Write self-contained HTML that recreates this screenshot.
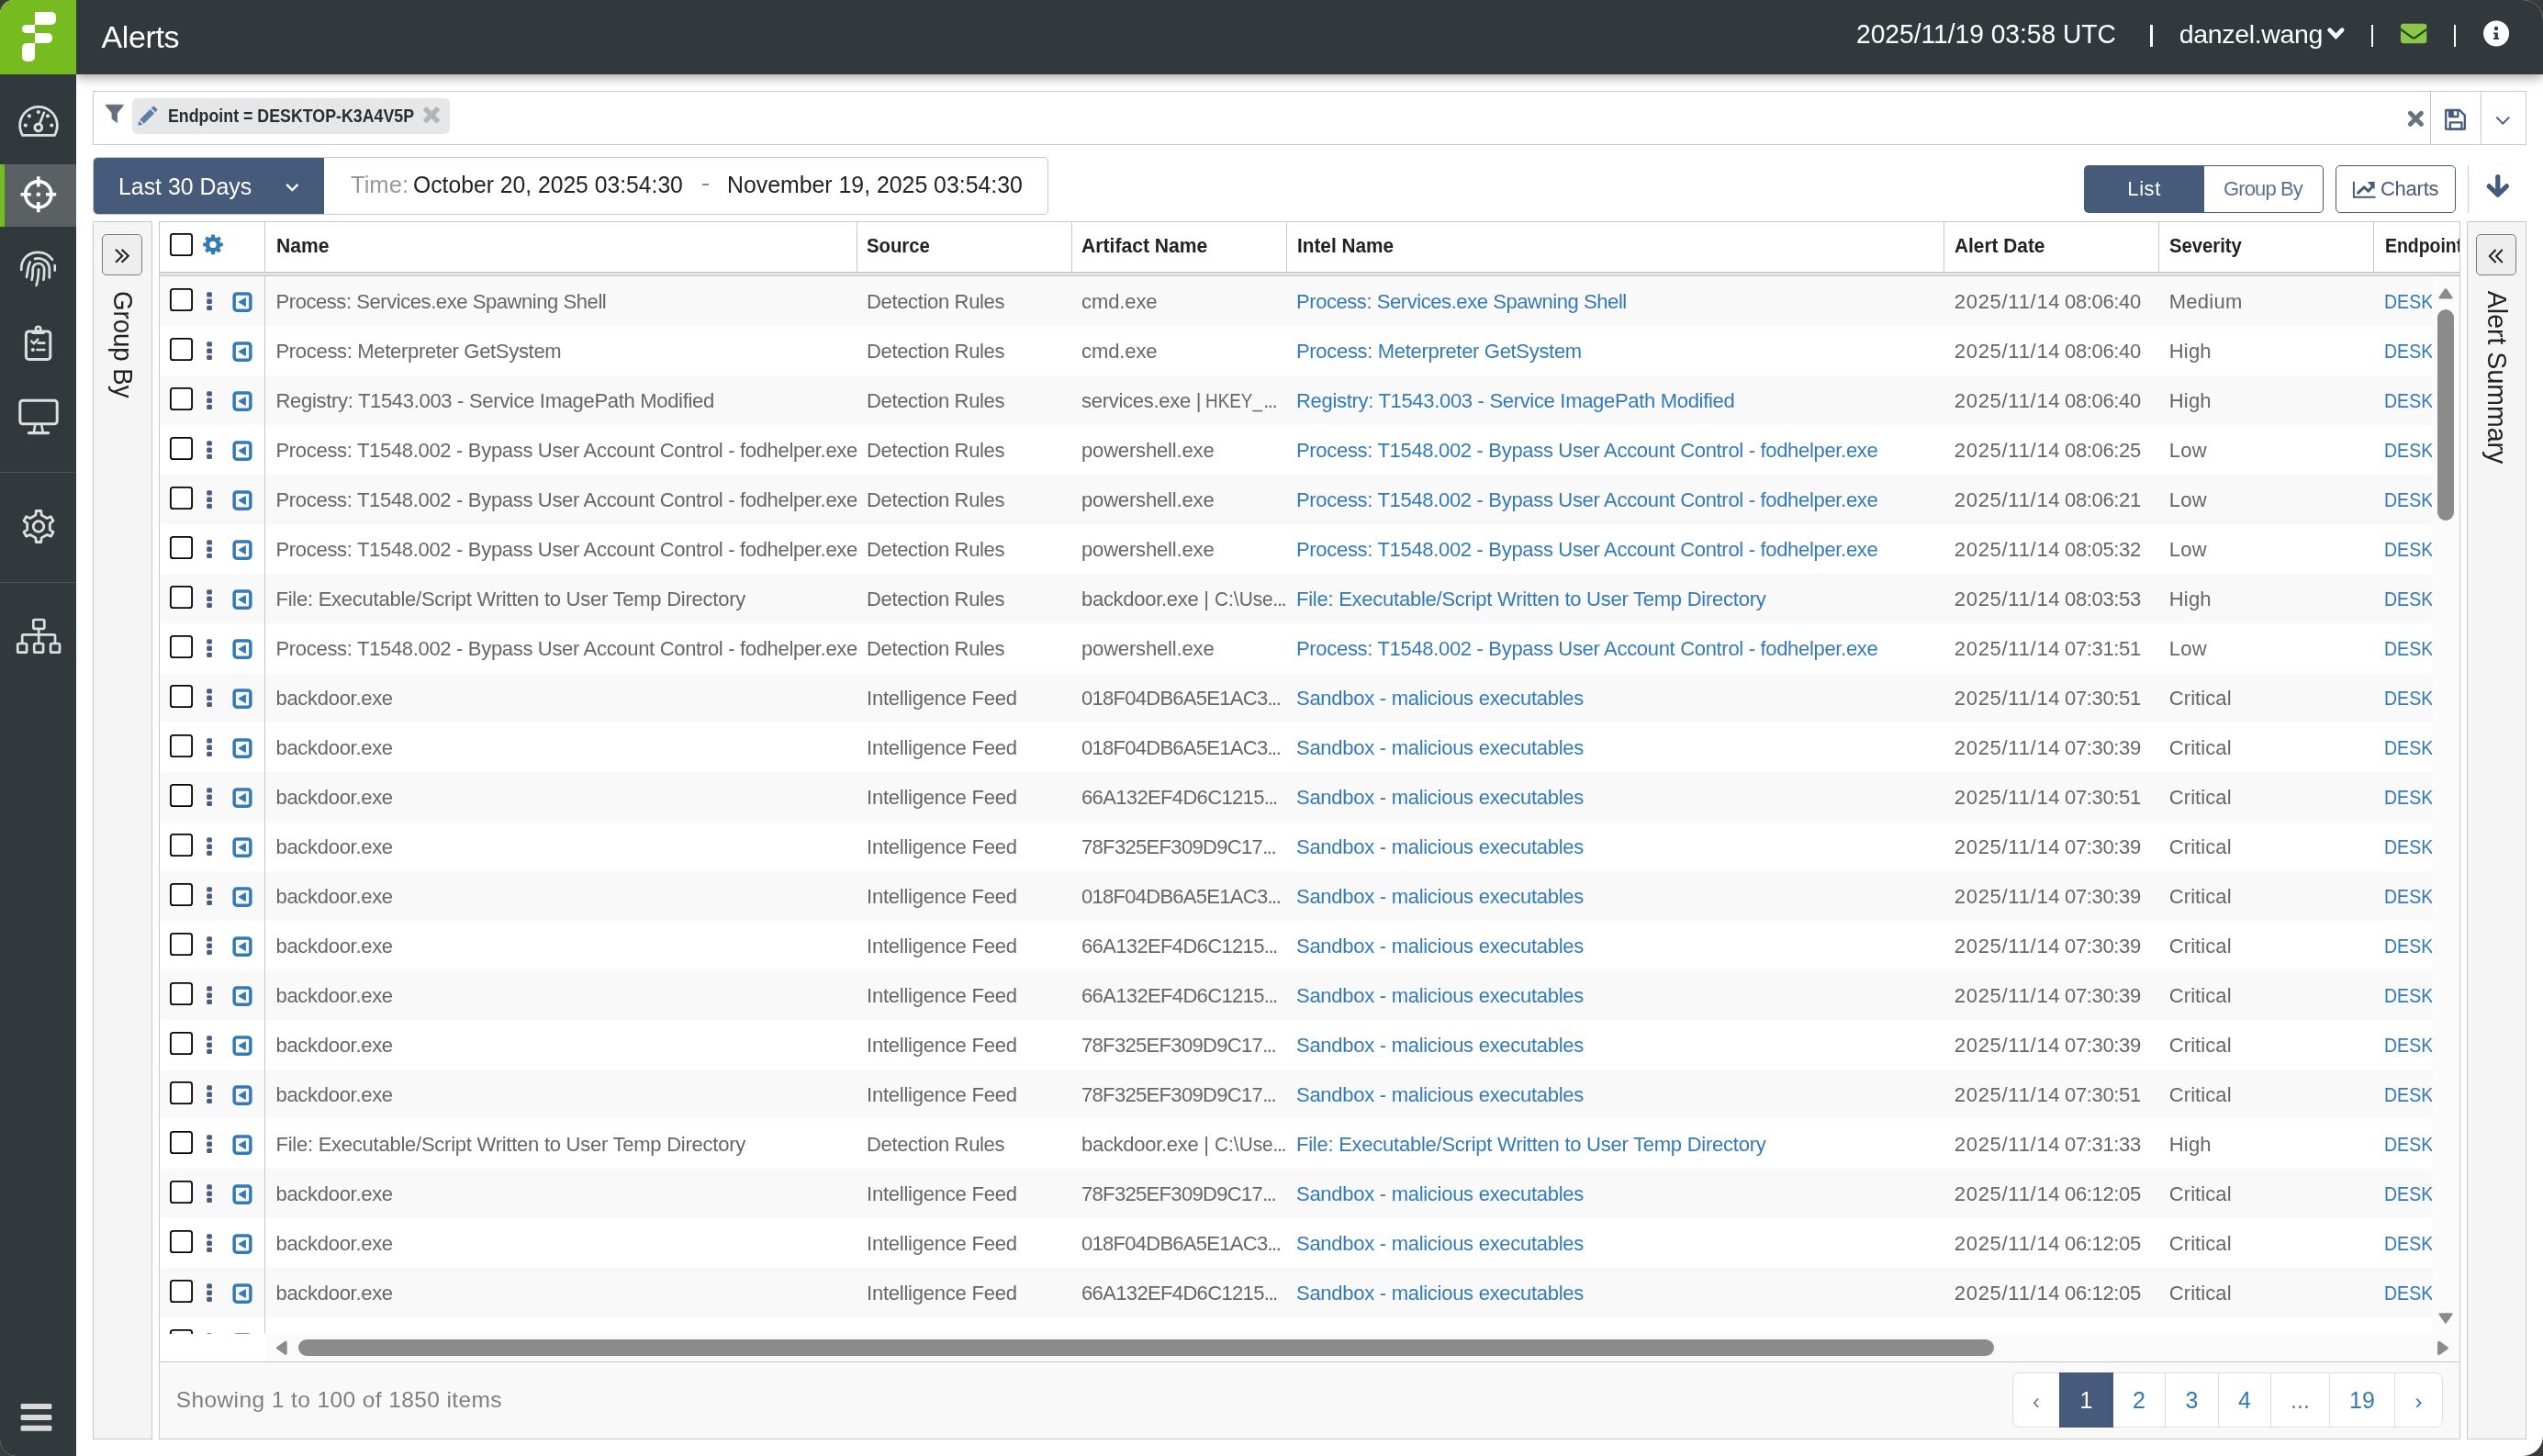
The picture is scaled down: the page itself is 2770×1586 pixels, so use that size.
<!DOCTYPE html>
<html><head><meta charset="utf-8"><title>Alerts</title>
<style>
*{box-sizing:border-box;margin:0;padding:0}
html,body{width:2770px;height:1586px;overflow:hidden;background:#3b3b3b}
body{font-family:"Liberation Sans",sans-serif;color:#666}
#app{position:absolute;left:0;top:0;width:2770px;height:1586px;background:#fff;overflow:hidden;border-radius:15px 22px 22px 18px;will-change:transform}
.abs{position:absolute}
svg{position:absolute;overflow:visible}
#side{position:absolute;left:0;top:0;width:83px;height:1586px;background:#32393c;z-index:5}
#logo{position:absolute;left:0;top:0;width:83px;height:81px;background:#76bb1f}
#logo i{position:absolute;background:#fff}
#hdr{position:absolute;left:83px;top:0;width:2687px;height:81px;background:#32393c;box-shadow:0 4px 11px rgba(0,0,0,.34);z-index:4;color:#fff}
#hdr .t{position:absolute;white-space:nowrap;color:#fff}
.act{position:absolute;left:0;top:179px;width:83px;height:68px;background:#5b6062;border-left:5px solid #76bb1f}
.sdiv{position:absolute;left:0;width:83px;height:1px;background:#4a5154}
.box{position:absolute;border:1px solid #c9c9c9;background:#fff}
.t{position:absolute;white-space:nowrap}
#rows{position:absolute;left:174px;top:301px;width:2475px;height:1152px;overflow:hidden}
.row{position:absolute;left:0;width:2475px;height:54px;background:#fff;font-size:22px;line-height:54px}
.row.odd{background:#f9f9f9}
.c{position:absolute;top:1px;white-space:nowrap;color:#666}
.dt{font-style:normal;letter-spacing:-1.5px}
.c4,.c7{color:#337ab7}
.cb{position:absolute;left:11px;top:13px;width:25px;height:25px;border:2px solid #0a0a0a;border-radius:3.5px;background:#fff}
.vsep{position:absolute;width:1px;background:#c9c9c9}
.th{position:absolute;top:240px;font-size:22px;line-height:54px;font-weight:bold;color:#222;white-space:nowrap;transform-origin:0 50%}
.pg{position:absolute;top:0;height:58px;line-height:58px;text-align:center;font-size:25px;color:#337ab7;border-left:1px solid #ddd}

.ri{position:absolute;left:10px;top:12px;width:94px;height:30px}

</style></head>
<body>
<div id="app">
<svg width="0" height="0" style="position:absolute"><defs><g id="cbx"><rect x="1.9" y="1.9" width="23.2" height="23.2" rx="2.7" fill="#fff" stroke="#050505" stroke-width="1.85"/></g><g id="rowic"><use href="#cbx"/><rect x="41.2" y="5.2" width="5.75" height="5.4" rx="1.5" fill="#485d80"/><rect x="41.2" y="12.5" width="5.75" height="5.4" rx="1.5" fill="#485d80"/><rect x="41.2" y="19.8" width="5.75" height="5.3" rx="1.5" fill="#485d80"/><rect x="71.15" y="6.95" width="17.7" height="18.2" rx="2.8" fill="none" stroke="#337ab7" stroke-width="3.5"/><path d="M83.3 11.9L76.3 16.1L83.3 20.3Z" fill="#337ab7" stroke="#337ab7" stroke-width="1.2" stroke-linejoin="round"/></g></defs></svg>

<!-- ===== sidebar ===== -->
<div id="side">
 <div id="logo">
  <i style="left:38px;top:13px;width:23.3px;height:14px;border-radius:0 5px 5px 0"></i>
  <i style="left:24px;top:26.5px;width:14px;height:9.5px;border-radius:5px 0 0 5px"></i>
  <i style="left:38px;top:36px;width:19.3px;height:11px;border-radius:0 5px 5px 0"></i>
  <i style="left:24px;top:47px;width:14px;height:19.5px;border-radius:5px 0 5px 5px"></i>
 </div>
 <div class="act"></div>
 <div class="sdiv" style="top:514px"></div>
 <div class="sdiv" style="top:634px"></div>
 <svg width="83" height="1586" style="left:0;top:0" fill="none" stroke="#dedede" stroke-width="3" stroke-linecap="round" stroke-linejoin="round">
  <!-- gauge -->
  <path d="M24.7 147.4 A20.35 20.35 0 1 1 59.3 147.4 Z" stroke-width="2.8"/>
  <g fill="#dedede" stroke="none"><circle cx="27.8" cy="136.5" r="2.1"/><circle cx="31.9" cy="126.3" r="2.1"/><circle cx="41.8" cy="122.1" r="2.1"/><circle cx="52" cy="126.3" r="2.1"/><circle cx="56.3" cy="136.5" r="2.1"/></g>
  <path d="M43.2 134.8 L48 122.6" stroke-width="2.6"/>
  <circle cx="41.8" cy="138.9" r="3.9"/>
  <!-- crosshair -->
  <g stroke="#fff" stroke-width="3.6" stroke-linecap="butt">
   <circle cx="41.8" cy="211.7" r="14.1"/>
   <path d="M22.5 211.7H33.8 M50 211.7H61.2 M41.8 192.2V203.6 M41.8 220V231.2"/>
  </g>
  <circle cx="41.8" cy="211.7" r="2.3" fill="#fff" stroke="none"/>
  <!-- fingerprint -->
  <g stroke-width="2.7">
   <path d="M23.3 293.8 C22.6 282 31 274.8 41.5 274.8 C48 274.8 53.6 277.8 57 282.8"/>
   <path d="M59.7 289 V294.6"/>
   <path d="M32.8 285.4 C30.2 290 30.3 296 28.9 302"/>
   <path d="M38 281.9 C46 279.6 53.8 285 53.8 293 V302.5"/>
   <path d="M34.6 304.8 C36.2 299.6 35.4 296 35.7 293 C36.2 289 38.6 287 41.8 287 C45.5 287 48.2 289.8 48.2 294 C48.2 298 48 301.5 47.4 304.8"/>
   <path d="M42 293.6 C42 300 41.2 306 39.6 310.8"/>
  </g>
  <!-- clipboard -->
  <rect x="28.4" y="361" width="26.4" height="30.4" rx="3"/>
  <circle cx="41.6" cy="358.4" r="2.7" stroke-width="2.6"/>
  <path d="M36 362.3H47.2" stroke-width="3.4"/>
  <path d="M34.2 371.6L37 374.3L41.2 369.6" stroke-width="2.4"/>
  <path d="M41.5 373.6H48.4 M40.4 381H48.4" stroke-width="2.6"/>
  <circle cx="35.8" cy="381" r="2" fill="#dedede" stroke="none"/>
  <!-- monitor -->
  <rect x="21.8" y="436.2" width="40.4" height="25.6" rx="3"/>
  <path d="M38.2 463.5L37 470 M45.4 463.5L46.6 470" stroke-width="2.6"/>
  <path d="M31.4 471.6H52.6" stroke-width="3.2"/>
  <!-- gear -->
  <path d="M38.82 561.10 L39.31 556.51 L44.69 556.51 L45.18 561.10 L51.15 564.54 L55.37 562.68 L58.06 567.34 L54.33 570.06 L54.33 576.94 L58.06 579.66 L55.37 584.32 L51.15 582.46 L45.18 585.90 L44.69 590.49 L39.31 590.49 L38.82 585.90 L32.85 582.46 L28.63 584.32 L25.94 579.66 L29.67 576.94 L29.67 570.06 L25.94 567.34 L28.63 562.68 L32.85 564.54Z" stroke-width="2.8"/>
  <circle cx="42" cy="573.5" r="5.8" stroke-width="2.8"/>
  <!-- sitemap -->
  <g stroke-width="2.7">
  <rect x="36.3" y="675" width="12" height="9.8" rx="1.5"/>
  <rect x="19.2" y="701" width="9.9" height="9.7" rx="1.5"/>
  <rect x="37.2" y="701" width="9.9" height="9.7" rx="1.5"/>
  <rect x="55.1" y="701" width="9.9" height="9.7" rx="1.5"/>
  <path d="M42.2 685V700 M24.2 700V692.8Q24.2 691.4 25.6 691.4H58.6Q60 691.4 60 692.8V700"/>
  </g>
  <!-- hamburger -->
  <g fill="#d9d9d9" stroke="none"><rect x="22.6" y="1529" width="33.8" height="6" rx="1.5"/><rect x="22.6" y="1541" width="33.8" height="6" rx="1.5"/><rect x="22.6" y="1552.8" width="33.8" height="6" rx="1.5"/></g>
 </svg>
</div>
<!-- ===== header ===== -->
<div id="hdr">
 <div class="t" id="h_title" style="left:27.60px;top:16.00px;font-size:34px;line-height:48px;color:#fff;letter-spacing:-0.4px;">Alerts</div>
 <div class="t" id="h_time" style="left:1939.05px;top:16.40px;font-size:29.5px;line-height:41px;color:#fff;transform-origin:0 50%;transform:scaleX(0.9548);">2025/11/19 03:58 UTC</div>
 <div class="t" id="h_user" style="left:2290.80px;top:17.30px;font-size:28.5px;line-height:40px;color:#fff;letter-spacing:-0.35px;">danzel.wang</div>
 <div class="abs" style="left:2259px;top:27px;width:2.6px;height:24px;background:#fff"></div>
 <div class="abs" style="left:2499.5px;top:27px;width:2.6px;height:24px;background:#fff"></div>
 <div class="abs" style="left:2589.5px;top:27px;width:2.6px;height:24px;background:#fff"></div>
 <svg width="2687" height="81" style="left:0;top:0">
  <path d="M2454.6 32.6L2461.4 39.6L2468.2 32.6" fill="none" stroke="#fff" stroke-width="4.6" stroke-linecap="round" stroke-linejoin="miter"/>
  <rect x="2532" y="25.8" width="28.3" height="21.4" rx="3.2" fill="#8cc74c"/>
  <path d="M2531.5 31.6L2544.6 41Q2546.1 42 2547.7 41L2560.8 31.6" fill="none" stroke="#234d10" stroke-width="2.2"/>
  <circle cx="2636.1" cy="36.5" r="14" fill="#fff"/>
  <circle cx="2636" cy="31" r="2.2" fill="#32393c"/>
  <path d="M2633 35.4H2637.8V41.2H2639.2V43H2633V41.2H2634.5V37.1H2633Z" fill="#32393c"/>
 </svg>
</div>
<!-- ===== filter bar ===== -->
<div class="box" style="left:101px;top:99px;width:2651px;height:59px"></div>
<div class="vsep" style="left:2647px;top:100px;height:57px"></div>
<div class="vsep" style="left:2702px;top:100px;height:57px"></div>
<div class="abs" style="left:144px;top:107px;width:346px;height:38.7px;background:#e6e7e9;border-radius:6px"></div>
<div class="t" id="chip" style="left:182.79px;top:113.40px;font-size:19.5px;line-height:27px;color:#2b2b33;font-weight:bold;transform-origin:0 50%;transform:scaleX(0.9123);">Endpoint = DESKTOP-K3A4V5P</div>
<svg width="2770" height="70" style="left:0;top:95px">
 <!-- funnel -->
 <path d="M116 19.2H133.6Q135 19.2 134 20.4L127.6 28V38.6L122 34.4V28L115.6 20.4Q114.6 19.2 116 19.2Z" fill="#676e7b" stroke="#676e7b" stroke-width="0.8" stroke-linejoin="round"/>
 <!-- pencil -->
 <g fill="#5b7fa8">
  <path d="M150.2 41.8L151.3 36.4L155.6 40.7Z"/>
  <path d="M152.3 35.2L163.6 23.9L168.1 28.4L156.8 39.7Z"/>
  <path d="M164.7 22.8L166.3 21.2Q167.4 20.1 168.5 21.2L170.8 23.5Q171.9 24.6 170.8 25.7L169.2 27.3Z"/>
 </g>
 <!-- chip x -->
 <path d="M462.6 22.9L477.4 37.7 M477.4 22.9L462.6 37.7" stroke="#b4b4b4" stroke-width="5.4" fill="none"/>
 <!-- clear x -->
 <path d="M2625.4 28.3L2637.4 40.3 M2637.4 28.3L2625.4 40.3" stroke="#6b7380" stroke-width="5" stroke-linecap="round" fill="none"/>
 <!-- save -->
 <g fill="none" stroke="#44597c" stroke-width="2.3" stroke-linejoin="round">
  <path d="M2664.2 25H2679.2L2684.8 30.6V45.7H2664.2Z"/>
  <rect x="2668.8" y="38.4" width="12.6" height="7.3"/>
  <path d="M2668 25.5V32H2677.4V25.5"/>
  <rect x="2668" y="25.4" width="4.8" height="6.6" fill="#44597c" stroke="none"/>
 </g>
 <!-- chevron -->
 <path d="M2719.4 32.6L2726.3 39.6L2733.2 32.6" fill="none" stroke="#44597c" stroke-width="2"/>
</svg>
<!-- ===== time row ===== -->
<div class="box" style="left:101px;top:171px;width:1041px;height:63px;border-radius:5px"></div>
<div class="abs" style="left:102px;top:172px;width:251px;height:61px;background:#465a7a;border-radius:4.5px 0 0 4.5px"></div>
<div class="t" id="t_last" style="left:128.97px;top:185.10px;font-size:25.8px;line-height:36px;color:#fff;transform-origin:0 50%;transform:scaleX(0.9635);">Last 30 Days</div>
<div class="t" id="t_time" style="left:382.40px;top:183.10px;font-size:25.8px;line-height:36px;color:#999;transform-origin:0 50%;transform:scaleX(0.9918);">Time:</div>
<div class="t" id="t_d1" style="left:450.14px;top:183.10px;font-size:25.8px;line-height:36px;color:#222;transform-origin:0 50%;transform:scaleX(0.9574);">October 20, 2025 03:54:30</div>
<div class="abs" style="left:765.2px;top:200.3px;width:6.9px;height:2.2px;background:#888"></div>
<div class="t" id="t_d2" style="left:792.37px;top:183.10px;font-size:25.8px;line-height:36px;color:#222;transform-origin:0 50%;transform:scaleX(0.9631);">November 19, 2025 03:54:30</div>
<div class="abs" style="left:2270px;top:180px;width:131px;height:51.6px;background:#465a7a;border-radius:5px 0 0 5px"></div>
<div class="abs" style="left:2400.8px;top:180px;width:129.9px;height:51.6px;border:1px solid #465a7a;border-left:none;border-radius:0 5px 5px 0;background:#fff"></div>
<div class="abs" style="left:2544px;top:180px;width:131px;height:51.6px;border:1px solid #465a7a;border-radius:5px;background:#fff"></div>
<div class="t" id="b_list" style="left:2317.30px;top:190.20px;font-size:22px;line-height:31px;color:#fff;letter-spacing:0.6px;">List</div>
<div class="t" id="b_grp" style="left:2422.10px;top:190.20px;font-size:22px;line-height:31px;color:#5b7296;letter-spacing:-0.9px;">Group By</div>
<div class="t" id="b_chr" style="left:2592.90px;top:190.20px;font-size:22px;line-height:31px;color:#465a7a;letter-spacing:-0.22px;">Charts</div>
<div class="vsep" style="left:2688px;top:180px;height:52px"></div>
<svg width="2770" height="70" style="left:0;top:170px">
 <path d="M312.2 30.8L318.3 37L324.4 30.8" fill="none" stroke="#fff" stroke-width="2.4"/>
 <!-- chart icon -->
 <path d="M2563.9 27.7V44.8H2587.6" fill="none" stroke="#465a7a" stroke-width="2" stroke-linecap="butt" stroke-linejoin="miter"/>
 <path d="M2568.6 40.2L2575.2 33.8L2579.6 38.2L2584.4 33" fill="none" stroke="#465a7a" stroke-width="3" stroke-linecap="round" stroke-linejoin="round"/>
 <path d="M2578.6 28H2586.6V36.2Z" fill="#465a7a"/>
 <!-- arrow down -->
 <path d="M2720.8 22.6V40 M2711.2 32.8L2720.8 42.2L2730.4 32.8" fill="none" stroke="#44597c" stroke-width="5.2" stroke-linecap="round" stroke-linejoin="round"/>
</svg>
<!-- ===== group by panel ===== -->
<div class="box" style="left:101px;top:241px;width:65px;height:1327px;background:#f5f5f5"></div>
<div class="abs" style="left:111px;top:255px;width:44px;height:45px;border:1px solid #7a7a7a;border-radius:5px;background:#eee"></div>
<svg width="50" height="50" style="left:108px;top:253px"><path d="M18 18.8L25.2 25.8L18 32.8 M24.6 18.8L31.8 25.8L24.6 32.8" fill="none" stroke="#222" stroke-width="2.1"/></svg>
<div class="t" id="v_grp" style="left:0;top:0;font-size:29.5px;line-height:33px;color:#222;transform-origin:0 0;transform:translate(151.20px,317.07px) rotate(90deg) scaleX(0.9341)">Group By</div>
<!-- ===== right panel ===== -->
<div class="box" style="left:2687px;top:241px;width:65px;height:1327px;background:#f5f5f5"></div>
<div class="abs" style="left:2697px;top:255px;width:44px;height:45px;border:1px solid #7a7a7a;border-radius:5px;background:#eee"></div>
<svg width="50" height="50" style="left:2694px;top:253px"><path d="M24.6 19L17.8 26L24.6 33 M31.8 19L25 26L31.8 33" fill="none" stroke="#222" stroke-width="2"/></svg>
<div class="t" id="v_sum" style="left:0;top:0;font-size:29.5px;line-height:33px;color:#222;transform-origin:0 0;transform:translate(2737.00px,316.80px) rotate(90deg) scaleX(0.9667)">Alert Summary</div>
<!-- ===== table ===== -->
<div class="box" style="left:173px;top:241px;width:2507px;height:1327px"></div>

<div class="vsep" style="left:933px;top:242px;height:54px"></div>
<div class="vsep" style="left:1167px;top:242px;height:54px"></div>
<div class="vsep" style="left:1401px;top:242px;height:54px"></div>
<div class="vsep" style="left:2117px;top:242px;height:54px"></div>
<div class="vsep" style="left:2351px;top:242px;height:54px"></div>
<div class="vsep" style="left:2585px;top:242px;height:54px"></div>
<div class="abs" style="left:174px;top:296px;width:2505px;height:5px;background:#fff;border-top:2px solid #cdcdcd;border-bottom:2px solid #cdcdcd"></div>
<svg width="30" height="30" style="left:184px;top:253px"><use href="#cbx"/></svg>
<svg width="30" height="30" style="left:217px;top:251px"><g transform="translate(15,15.4)"><path d="M-1.50 -7.55 L-1.37 -10.21 L1.37 -10.21 L1.50 -7.55 L4.28 -6.40 L6.25 -8.19 L8.19 -6.25 L6.40 -4.28 L7.55 -1.50 L10.21 -1.37 L10.21 1.37 L7.55 1.50 L6.40 4.28 L8.19 6.25 L6.25 8.19 L4.28 6.40 L1.50 7.55 L1.37 10.21 L-1.37 10.21 L-1.50 7.55 L-4.28 6.40 L-6.25 8.19 L-8.19 6.25 L-6.40 4.28 L-7.55 1.50 L-10.21 1.37 L-10.21 -1.37 L-7.55 -1.50 L-6.40 -4.28 L-8.19 -6.25 L-6.25 -8.19 L-4.28 -6.40Z" fill="#337ab7" stroke="#337ab7" stroke-width="1.2" stroke-linejoin="round"/><circle r="3.7" fill="#fff"/></g></svg>
<div class="t" id="th1" style="left:300.54px;top:251.60px;font-size:22px;line-height:31px;color:#222;font-weight:bold;transform-origin:0 50%;transform:scaleX(0.9586);">Name</div>
<div class="t" id="th2" style="left:944.08px;top:251.60px;font-size:22px;line-height:31px;color:#222;font-weight:bold;transform-origin:0 50%;transform:scaleX(0.9233);">Source</div>
<div class="t" id="th3" style="left:1178.24px;top:251.60px;font-size:22px;line-height:31px;color:#222;font-weight:bold;transform-origin:0 50%;transform:scaleX(0.9603);">Artifact Name</div>
<div class="t" id="th4" style="left:1412.86px;top:251.60px;font-size:22px;line-height:31px;color:#222;font-weight:bold;transform-origin:0 50%;transform:scaleX(0.9436);">Intel Name</div>
<div class="t" id="th5" style="left:2128.75px;top:251.60px;font-size:22px;line-height:31px;color:#222;font-weight:bold;transform-origin:0 50%;transform:scaleX(0.9471);">Alert Date</div>
<div class="t" id="th6" style="left:2362.68px;top:251.60px;font-size:22px;line-height:31px;color:#222;font-weight:bold;transform-origin:0 50%;transform:scaleX(0.92);">Severity</div>
<div class="abs" style="left:2586px;top:242px;width:93px;height:54px;overflow:hidden"><div class="t" id="th7" style="left:11.52px;top:9.60px;font-size:22px;line-height:31px;color:#222;font-weight:bold;transform-origin:0 50%;transform:scaleX(0.8837);">Endpoint</div></div>
<div id="rows">
<div class="row odd" style="top:0px"><svg class="ri"><use href="#rowic"/></svg><span class="c c1" style="left:126.50px;letter-spacing:-0.434px">Process: Services.exe Spawning Shell</span><span class="c c2" style="left:770.00px;letter-spacing:-0.343px">Detection Rules</span><span class="c c3" style="left:1004.00px;letter-spacing:-0.1px">cmd.exe</span><span class="c c4" style="left:1238.00px;letter-spacing:-0.434px">Process: Services.exe Spawning Shell</span><span class="c c5" style="left:1954.80px;letter-spacing:0.7px">2025/11/14</span><span class="c c5" style="left:2075.10px;letter-spacing:-0.371px">08:06:40</span><span class="c c6" style="left:2188.80px;letter-spacing:0.24px">Medium</span><span class="c c7" style="left:2422.80px;transform-origin:0 50%;transform:scaleX(0.888)">DESKTOP-K3A4V5P</span></div>
<div class="row" style="top:54px"><svg class="ri"><use href="#rowic"/></svg><span class="c c1" style="left:126.50px;letter-spacing:-0.317px">Process: Meterpreter GetSystem</span><span class="c c2" style="left:770.00px;letter-spacing:-0.343px">Detection Rules</span><span class="c c3" style="left:1004.00px;letter-spacing:-0.1px">cmd.exe</span><span class="c c4" style="left:1238.00px;letter-spacing:-0.317px">Process: Meterpreter GetSystem</span><span class="c c5" style="left:1954.80px;letter-spacing:0.7px">2025/11/14</span><span class="c c5" style="left:2075.10px;letter-spacing:-0.371px">08:06:40</span><span class="c c6" style="left:2188.80px;letter-spacing:0.167px">High</span><span class="c c7" style="left:2422.80px;transform-origin:0 50%;transform:scaleX(0.888)">DESKTOP-K3A4V5P</span></div>
<div class="row odd" style="top:108px"><svg class="ri"><use href="#rowic"/></svg><span class="c c1" style="left:126.50px;letter-spacing:-0.313px">Registry: T1543.003 - Service ImagePath Modified</span><span class="c c2" style="left:770.00px;letter-spacing:-0.343px">Detection Rules</span><span class="c c3" style="left:1004.00px;letter-spacing:-0.285px">services.exe |</span><span class="c c3" style="left:1138.58px;transform-origin:0 50%;transform:scaleX(0.8592)">HKEY_</span><span class="c c3" style="left:1202.20px"><i class="dt">...</i></span><span class="c c4" style="left:1238.00px;letter-spacing:-0.313px">Registry: T1543.003 - Service ImagePath Modified</span><span class="c c5" style="left:1954.80px;letter-spacing:0.7px">2025/11/14</span><span class="c c5" style="left:2075.10px;letter-spacing:-0.371px">08:06:40</span><span class="c c6" style="left:2188.80px;letter-spacing:0.167px">High</span><span class="c c7" style="left:2422.80px;transform-origin:0 50%;transform:scaleX(0.888)">DESKTOP-K3A4V5P</span></div>
<div class="row" style="top:162px"><svg class="ri"><use href="#rowic"/></svg><span class="c c1" style="left:126.50px;letter-spacing:-0.319px">Process: T1548.002 - Bypass User Account Control - fodhelper.exe</span><span class="c c2" style="left:770.00px;letter-spacing:-0.343px">Detection Rules</span><span class="c c3" style="left:1004.00px;letter-spacing:-0.162px">powershell.exe</span><span class="c c4" style="left:1238.00px;letter-spacing:-0.319px">Process: T1548.002 - Bypass User Account Control - fodhelper.exe</span><span class="c c5" style="left:1954.80px;letter-spacing:0.7px">2025/11/14</span><span class="c c5" style="left:2075.10px;letter-spacing:-0.371px">08:06:25</span><span class="c c6" style="left:2188.80px;letter-spacing:0.2px">Low</span><span class="c c7" style="left:2422.80px;transform-origin:0 50%;transform:scaleX(0.888)">DESKTOP-K3A4V5P</span></div>
<div class="row odd" style="top:216px"><svg class="ri"><use href="#rowic"/></svg><span class="c c1" style="left:126.50px;letter-spacing:-0.319px">Process: T1548.002 - Bypass User Account Control - fodhelper.exe</span><span class="c c2" style="left:770.00px;letter-spacing:-0.343px">Detection Rules</span><span class="c c3" style="left:1004.00px;letter-spacing:-0.162px">powershell.exe</span><span class="c c4" style="left:1238.00px;letter-spacing:-0.319px">Process: T1548.002 - Bypass User Account Control - fodhelper.exe</span><span class="c c5" style="left:1954.80px;letter-spacing:0.7px">2025/11/14</span><span class="c c5" style="left:2075.10px;letter-spacing:-0.371px">08:06:21</span><span class="c c6" style="left:2188.80px;letter-spacing:0.2px">Low</span><span class="c c7" style="left:2422.80px;transform-origin:0 50%;transform:scaleX(0.888)">DESKTOP-K3A4V5P</span></div>
<div class="row" style="top:270px"><svg class="ri"><use href="#rowic"/></svg><span class="c c1" style="left:126.50px;letter-spacing:-0.319px">Process: T1548.002 - Bypass User Account Control - fodhelper.exe</span><span class="c c2" style="left:770.00px;letter-spacing:-0.343px">Detection Rules</span><span class="c c3" style="left:1004.00px;letter-spacing:-0.162px">powershell.exe</span><span class="c c4" style="left:1238.00px;letter-spacing:-0.319px">Process: T1548.002 - Bypass User Account Control - fodhelper.exe</span><span class="c c5" style="left:1954.80px;letter-spacing:0.7px">2025/11/14</span><span class="c c5" style="left:2075.10px;letter-spacing:-0.371px">08:05:32</span><span class="c c6" style="left:2188.80px;letter-spacing:0.2px">Low</span><span class="c c7" style="left:2422.80px;transform-origin:0 50%;transform:scaleX(0.888)">DESKTOP-K3A4V5P</span></div>
<div class="row odd" style="top:324px"><svg class="ri"><use href="#rowic"/></svg><span class="c c1" style="left:126.50px;letter-spacing:-0.249px">File: Executable/Script Written to User Temp Directory</span><span class="c c2" style="left:770.00px;letter-spacing:-0.343px">Detection Rules</span><span class="c c3" style="left:1004.00px;letter-spacing:-0.285px">backdoor.exe |</span><span class="c c3" style="left:1148.55px;transform-origin:0 50%;transform:scaleX(0.9477)">C:\Use</span><span class="c c3" style="left:1212.30px"><i class="dt">...</i></span><span class="c c4" style="left:1238.00px;letter-spacing:-0.249px">File: Executable/Script Written to User Temp Directory</span><span class="c c5" style="left:1954.80px;letter-spacing:0.7px">2025/11/14</span><span class="c c5" style="left:2075.10px;letter-spacing:-0.371px">08:03:53</span><span class="c c6" style="left:2188.80px;letter-spacing:0.167px">High</span><span class="c c7" style="left:2422.80px;transform-origin:0 50%;transform:scaleX(0.888)">DESKTOP-K3A4V5P</span></div>
<div class="row" style="top:378px"><svg class="ri"><use href="#rowic"/></svg><span class="c c1" style="left:126.50px;letter-spacing:-0.319px">Process: T1548.002 - Bypass User Account Control - fodhelper.exe</span><span class="c c2" style="left:770.00px;letter-spacing:-0.343px">Detection Rules</span><span class="c c3" style="left:1004.00px;letter-spacing:-0.162px">powershell.exe</span><span class="c c4" style="left:1238.00px;letter-spacing:-0.319px">Process: T1548.002 - Bypass User Account Control - fodhelper.exe</span><span class="c c5" style="left:1954.80px;letter-spacing:0.7px">2025/11/14</span><span class="c c5" style="left:2075.10px;letter-spacing:-0.371px">07:31:51</span><span class="c c6" style="left:2188.80px;letter-spacing:0.2px">Low</span><span class="c c7" style="left:2422.80px;transform-origin:0 50%;transform:scaleX(0.888)">DESKTOP-K3A4V5P</span></div>
<div class="row odd" style="top:432px"><svg class="ri"><use href="#rowic"/></svg><span class="c c1" style="left:126.50px;letter-spacing:-0.3px">backdoor.exe</span><span class="c c2" style="left:770.00px;letter-spacing:-0.225px">Intelligence Feed</span><span class="c c3" style="left:1004.00px;letter-spacing:-0.727px">018F04DB6A5E1AC3<i class="dt">...</i></span><span class="c c4" style="left:1238.00px;letter-spacing:-0.277px">Sandbox - malicious executables</span><span class="c c5" style="left:1954.80px;letter-spacing:0.7px">2025/11/14</span><span class="c c5" style="left:2075.10px;letter-spacing:-0.371px">07:30:51</span><span class="c c6" style="left:2188.80px;letter-spacing:0.071px">Critical</span><span class="c c7" style="left:2422.80px;transform-origin:0 50%;transform:scaleX(0.888)">DESKTOP-K3A4V5P</span></div>
<div class="row" style="top:486px"><svg class="ri"><use href="#rowic"/></svg><span class="c c1" style="left:126.50px;letter-spacing:-0.3px">backdoor.exe</span><span class="c c2" style="left:770.00px;letter-spacing:-0.225px">Intelligence Feed</span><span class="c c3" style="left:1004.00px;letter-spacing:-0.727px">018F04DB6A5E1AC3<i class="dt">...</i></span><span class="c c4" style="left:1238.00px;letter-spacing:-0.277px">Sandbox - malicious executables</span><span class="c c5" style="left:1954.80px;letter-spacing:0.7px">2025/11/14</span><span class="c c5" style="left:2075.10px;letter-spacing:-0.371px">07:30:39</span><span class="c c6" style="left:2188.80px;letter-spacing:0.071px">Critical</span><span class="c c7" style="left:2422.80px;transform-origin:0 50%;transform:scaleX(0.888)">DESKTOP-K3A4V5P</span></div>
<div class="row odd" style="top:540px"><svg class="ri"><use href="#rowic"/></svg><span class="c c1" style="left:126.50px;letter-spacing:-0.3px">backdoor.exe</span><span class="c c2" style="left:770.00px;letter-spacing:-0.225px">Intelligence Feed</span><span class="c c3" style="left:1004.00px;letter-spacing:-0.647px">66A132EF4D6C1215<i class="dt">...</i></span><span class="c c4" style="left:1238.00px;letter-spacing:-0.277px">Sandbox - malicious executables</span><span class="c c5" style="left:1954.80px;letter-spacing:0.7px">2025/11/14</span><span class="c c5" style="left:2075.10px;letter-spacing:-0.371px">07:30:51</span><span class="c c6" style="left:2188.80px;letter-spacing:0.071px">Critical</span><span class="c c7" style="left:2422.80px;transform-origin:0 50%;transform:scaleX(0.888)">DESKTOP-K3A4V5P</span></div>
<div class="row" style="top:594px"><svg class="ri"><use href="#rowic"/></svg><span class="c c1" style="left:126.50px;letter-spacing:-0.3px">backdoor.exe</span><span class="c c2" style="left:770.00px;letter-spacing:-0.225px">Intelligence Feed</span><span class="c c3" style="left:1004.00px;letter-spacing:-0.673px">78F325EF309D9C17<i class="dt">...</i></span><span class="c c4" style="left:1238.00px;letter-spacing:-0.277px">Sandbox - malicious executables</span><span class="c c5" style="left:1954.80px;letter-spacing:0.7px">2025/11/14</span><span class="c c5" style="left:2075.10px;letter-spacing:-0.371px">07:30:39</span><span class="c c6" style="left:2188.80px;letter-spacing:0.071px">Critical</span><span class="c c7" style="left:2422.80px;transform-origin:0 50%;transform:scaleX(0.888)">DESKTOP-K3A4V5P</span></div>
<div class="row odd" style="top:648px"><svg class="ri"><use href="#rowic"/></svg><span class="c c1" style="left:126.50px;letter-spacing:-0.3px">backdoor.exe</span><span class="c c2" style="left:770.00px;letter-spacing:-0.225px">Intelligence Feed</span><span class="c c3" style="left:1004.00px;letter-spacing:-0.727px">018F04DB6A5E1AC3<i class="dt">...</i></span><span class="c c4" style="left:1238.00px;letter-spacing:-0.277px">Sandbox - malicious executables</span><span class="c c5" style="left:1954.80px;letter-spacing:0.7px">2025/11/14</span><span class="c c5" style="left:2075.10px;letter-spacing:-0.371px">07:30:39</span><span class="c c6" style="left:2188.80px;letter-spacing:0.071px">Critical</span><span class="c c7" style="left:2422.80px;transform-origin:0 50%;transform:scaleX(0.888)">DESKTOP-K3A4V5P</span></div>
<div class="row" style="top:702px"><svg class="ri"><use href="#rowic"/></svg><span class="c c1" style="left:126.50px;letter-spacing:-0.3px">backdoor.exe</span><span class="c c2" style="left:770.00px;letter-spacing:-0.225px">Intelligence Feed</span><span class="c c3" style="left:1004.00px;letter-spacing:-0.647px">66A132EF4D6C1215<i class="dt">...</i></span><span class="c c4" style="left:1238.00px;letter-spacing:-0.277px">Sandbox - malicious executables</span><span class="c c5" style="left:1954.80px;letter-spacing:0.7px">2025/11/14</span><span class="c c5" style="left:2075.10px;letter-spacing:-0.371px">07:30:39</span><span class="c c6" style="left:2188.80px;letter-spacing:0.071px">Critical</span><span class="c c7" style="left:2422.80px;transform-origin:0 50%;transform:scaleX(0.888)">DESKTOP-K3A4V5P</span></div>
<div class="row odd" style="top:756px"><svg class="ri"><use href="#rowic"/></svg><span class="c c1" style="left:126.50px;letter-spacing:-0.3px">backdoor.exe</span><span class="c c2" style="left:770.00px;letter-spacing:-0.225px">Intelligence Feed</span><span class="c c3" style="left:1004.00px;letter-spacing:-0.647px">66A132EF4D6C1215<i class="dt">...</i></span><span class="c c4" style="left:1238.00px;letter-spacing:-0.277px">Sandbox - malicious executables</span><span class="c c5" style="left:1954.80px;letter-spacing:0.7px">2025/11/14</span><span class="c c5" style="left:2075.10px;letter-spacing:-0.371px">07:30:39</span><span class="c c6" style="left:2188.80px;letter-spacing:0.071px">Critical</span><span class="c c7" style="left:2422.80px;transform-origin:0 50%;transform:scaleX(0.888)">DESKTOP-K3A4V5P</span></div>
<div class="row" style="top:810px"><svg class="ri"><use href="#rowic"/></svg><span class="c c1" style="left:126.50px;letter-spacing:-0.3px">backdoor.exe</span><span class="c c2" style="left:770.00px;letter-spacing:-0.225px">Intelligence Feed</span><span class="c c3" style="left:1004.00px;letter-spacing:-0.673px">78F325EF309D9C17<i class="dt">...</i></span><span class="c c4" style="left:1238.00px;letter-spacing:-0.277px">Sandbox - malicious executables</span><span class="c c5" style="left:1954.80px;letter-spacing:0.7px">2025/11/14</span><span class="c c5" style="left:2075.10px;letter-spacing:-0.371px">07:30:39</span><span class="c c6" style="left:2188.80px;letter-spacing:0.071px">Critical</span><span class="c c7" style="left:2422.80px;transform-origin:0 50%;transform:scaleX(0.888)">DESKTOP-K3A4V5P</span></div>
<div class="row odd" style="top:864px"><svg class="ri"><use href="#rowic"/></svg><span class="c c1" style="left:126.50px;letter-spacing:-0.3px">backdoor.exe</span><span class="c c2" style="left:770.00px;letter-spacing:-0.225px">Intelligence Feed</span><span class="c c3" style="left:1004.00px;letter-spacing:-0.673px">78F325EF309D9C17<i class="dt">...</i></span><span class="c c4" style="left:1238.00px;letter-spacing:-0.277px">Sandbox - malicious executables</span><span class="c c5" style="left:1954.80px;letter-spacing:0.7px">2025/11/14</span><span class="c c5" style="left:2075.10px;letter-spacing:-0.371px">07:30:51</span><span class="c c6" style="left:2188.80px;letter-spacing:0.071px">Critical</span><span class="c c7" style="left:2422.80px;transform-origin:0 50%;transform:scaleX(0.888)">DESKTOP-K3A4V5P</span></div>
<div class="row" style="top:918px"><svg class="ri"><use href="#rowic"/></svg><span class="c c1" style="left:126.50px;letter-spacing:-0.249px">File: Executable/Script Written to User Temp Directory</span><span class="c c2" style="left:770.00px;letter-spacing:-0.343px">Detection Rules</span><span class="c c3" style="left:1004.00px;letter-spacing:-0.285px">backdoor.exe |</span><span class="c c3" style="left:1148.55px;transform-origin:0 50%;transform:scaleX(0.9477)">C:\Use</span><span class="c c3" style="left:1212.30px"><i class="dt">...</i></span><span class="c c4" style="left:1238.00px;letter-spacing:-0.249px">File: Executable/Script Written to User Temp Directory</span><span class="c c5" style="left:1954.80px;letter-spacing:0.7px">2025/11/14</span><span class="c c5" style="left:2075.10px;letter-spacing:-0.371px">07:31:33</span><span class="c c6" style="left:2188.80px;letter-spacing:0.167px">High</span><span class="c c7" style="left:2422.80px;transform-origin:0 50%;transform:scaleX(0.888)">DESKTOP-K3A4V5P</span></div>
<div class="row odd" style="top:972px"><svg class="ri"><use href="#rowic"/></svg><span class="c c1" style="left:126.50px;letter-spacing:-0.3px">backdoor.exe</span><span class="c c2" style="left:770.00px;letter-spacing:-0.225px">Intelligence Feed</span><span class="c c3" style="left:1004.00px;letter-spacing:-0.673px">78F325EF309D9C17<i class="dt">...</i></span><span class="c c4" style="left:1238.00px;letter-spacing:-0.277px">Sandbox - malicious executables</span><span class="c c5" style="left:1954.80px;letter-spacing:0.7px">2025/11/14</span><span class="c c5" style="left:2075.10px;letter-spacing:-0.371px">06:12:05</span><span class="c c6" style="left:2188.80px;letter-spacing:0.071px">Critical</span><span class="c c7" style="left:2422.80px;transform-origin:0 50%;transform:scaleX(0.888)">DESKTOP-K3A4V5P</span></div>
<div class="row" style="top:1026px"><svg class="ri"><use href="#rowic"/></svg><span class="c c1" style="left:126.50px;letter-spacing:-0.3px">backdoor.exe</span><span class="c c2" style="left:770.00px;letter-spacing:-0.225px">Intelligence Feed</span><span class="c c3" style="left:1004.00px;letter-spacing:-0.727px">018F04DB6A5E1AC3<i class="dt">...</i></span><span class="c c4" style="left:1238.00px;letter-spacing:-0.277px">Sandbox - malicious executables</span><span class="c c5" style="left:1954.80px;letter-spacing:0.7px">2025/11/14</span><span class="c c5" style="left:2075.10px;letter-spacing:-0.371px">06:12:05</span><span class="c c6" style="left:2188.80px;letter-spacing:0.071px">Critical</span><span class="c c7" style="left:2422.80px;transform-origin:0 50%;transform:scaleX(0.888)">DESKTOP-K3A4V5P</span></div>
<div class="row odd" style="top:1080px"><svg class="ri"><use href="#rowic"/></svg><span class="c c1" style="left:126.50px;letter-spacing:-0.3px">backdoor.exe</span><span class="c c2" style="left:770.00px;letter-spacing:-0.225px">Intelligence Feed</span><span class="c c3" style="left:1004.00px;letter-spacing:-0.647px">66A132EF4D6C1215<i class="dt">...</i></span><span class="c c4" style="left:1238.00px;letter-spacing:-0.277px">Sandbox - malicious executables</span><span class="c c5" style="left:1954.80px;letter-spacing:0.7px">2025/11/14</span><span class="c c5" style="left:2075.10px;letter-spacing:-0.371px">06:12:05</span><span class="c c6" style="left:2188.80px;letter-spacing:0.071px">Critical</span><span class="c c7" style="left:2422.80px;transform-origin:0 50%;transform:scaleX(0.888)">DESKTOP-K3A4V5P</span></div>
<div class="row" style="top:1134px"><svg class="ri"><use href="#rowic"/></svg></div>
</div>

<div class="vsep" style="left:288px;top:242px;height:54px"></div>
<div class="vsep" style="left:288px;top:301px;height:1152px"></div>
<!-- ===== scrollbars ===== -->
<div class="abs" style="left:2649px;top:300.5px;width:30px;height:1152.5px;background:#fbfbfb"></div>
<div class="abs" style="left:2655.2px;top:336.8px;width:17.6px;height:230px;background:#8b8b8b;border-radius:9px"></div>
<svg width="40" height="20" style="left:2645px;top:308px"><path d="M12.6 16.2L19 7.2L25.4 16.2Z" fill="#8b8b8b" stroke="#8b8b8b" stroke-width="2.4" stroke-linejoin="round"/></svg>
<svg width="40" height="20" style="left:2645px;top:1424px"><path d="M12.6 7.4L19 16.4L25.4 7.4Z" fill="#8b8b8b" stroke="#8b8b8b" stroke-width="2.4" stroke-linejoin="round"/></svg>
<div class="abs" style="left:289px;top:1453px;width:2390px;height:30px;background:#fafafa"></div>
<div class="abs" style="left:174px;top:1453px;width:114px;height:30px;background:#fff"></div>
<div class="abs" style="left:325px;top:1459.3px;width:1847px;height:17.3px;background:#8b8b8b;border-radius:9px"></div>
<svg width="30" height="30" style="left:295px;top:1453px"><path d="M16.2 9.2L7.6 15.3L16.2 21.4Z" fill="#8b8b8b" stroke="#8b8b8b" stroke-width="3" stroke-linejoin="round"/></svg>
<svg width="30" height="30" style="left:2645px;top:1453px"><path d="M11.6 9.2L20.4 15.4L11.6 21.6Z" fill="#8b8b8b" stroke="#8b8b8b" stroke-width="3" stroke-linejoin="round"/></svg>
<!-- ===== footer ===== -->
<div class="abs" style="left:174px;top:1483px;width:2505px;height:84px;background:#f9f9f9;border-top:1px solid #c9c9c9"></div>
<div class="t" id="f_show" style="left:191.70px;top:1508.20px;font-size:24.5px;line-height:34px;color:#7f7f7f;letter-spacing:0.403px;">Showing 1 to 100 of 1850 items</div>
<div class="abs" id="pager" style="left:2192px;top:1495px;width:469px;height:60px;border:1px solid #ddd;border-radius:8px;background:#fff;overflow:hidden">
 <div class="pg" style="left:0;width:50px;color:#777;border-left:none;font-size:24px;line-height:62px">&#8249;</div>
 <div class="pg" style="left:109px;width:56px;border-left:none">2</div>
 <div class="pg" style="left:165px;width:58px">3</div>
 <div class="pg" style="left:223px;width:57px">4</div>
 <div class="pg" style="left:280px;width:64px;color:#777">...</div>
 <div class="pg" style="left:344px;width:71px">19</div>
 <div class="pg" style="left:415px;width:52px;color:#337ab7;font-size:24px"><span style="position:relative;top:2px">&#8250;</span></div>
</div>
<div class="abs" style="left:2243px;top:1495px;width:59px;height:60px;background:#465a7a;color:#fff;font-size:25px;line-height:60px;text-align:center">1</div>
</div>
</body></html>
